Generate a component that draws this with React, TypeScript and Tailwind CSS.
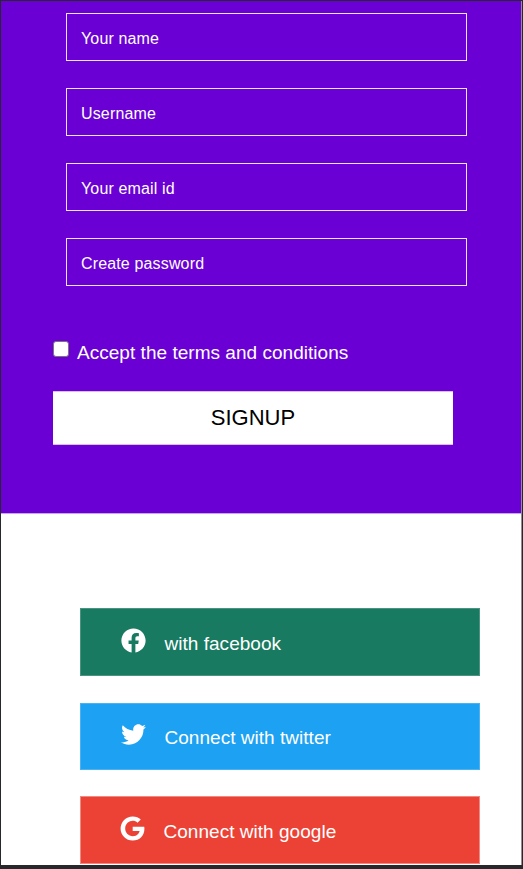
import type { ReactNode } from "react";
import { FaFacebook, FaTwitter, FaGoogle } from "react-icons/fa";

const fields = [
  { label: "Your name", type: "text" },
  { label: "Username", type: "text" },
  { label: "Your email id", type: "email" },
  { label: "Create password", type: "password" },
];

function Social({ icon, label, className }: { icon: ReactNode; label: string; className: string }) {
  return (
    <button type="button" className={`flex w-[400px] items-center border text-left text-[19px] leading-6 tracking-[0.03px] text-white ${className}`}>
      {icon}
      <span>{label}</span>
    </button>
  );
}

export default function App() {
  return (
    <div className="h-[869px] w-[523px] overflow-hidden border-t border-r border-b-4 border-l border-[#26282b] bg-white font-['Liberation_Sans',Arial,sans-serif]">
      <div className="flex h-full flex-col border-r border-[#909090]">
        <form className="h-[513px] shrink-0 border-b border-[#c8a5ef] bg-[#6a00d4] pt-3 pl-[52px]">
          <div className="flex flex-col gap-[27px] pl-[13px]">
            {fields.map((f) => (
              <input
                key={f.label}
                type={f.type}
                placeholder={f.label}
                className="h-12 w-[401px] border border-[#f0e5fb] bg-transparent px-3.5 pt-1 text-base tracking-[0.15px] text-white outline-none placeholder:text-white placeholder:opacity-100"
              />
            ))}
          </div>
          <label className="mt-[55px] flex h-6 items-start text-[19px] leading-6 tracking-[0.03px] text-white">
            <input type="checkbox" className="mr-2 h-4 w-4 appearance-none rounded-[3px] border border-[#767676] bg-white" />
            <span>Accept the terms and conditions</span>
          </label>
          <button type="button" className="mt-[26px] block h-[54px] w-[400px] border-y border-[#d9bdf5] bg-white pb-0.5 text-[22px] text-black">
            SIGNUP
          </button>
        </form>
        <div className="flex shrink-0 flex-col pt-[94px] pl-[79px]">
          <Social
            className="mb-[27px] h-[68px] border-[#489480] bg-[#187a61] pt-1 pl-10"
            icon={<FaFacebook className="mr-[18.5px] mb-[7px] h-[25px] w-[25px]" />}
            label="with facebook"
          />
          <Social
            className="mb-[26px] h-[67px] border-[#48b2f5] bg-[#1da1f2] pt-0.5 pl-10"
            icon={<FaTwitter className="mr-[18.5px] mb-1.5 h-[25px] w-[25px]" />}
            label="Connect with twitter"
          />
          <Social
            className="h-[68px] border-[#f28980] bg-[#ec4235] pt-1 pl-[39px]"
            icon={<FaGoogle className="mr-[18.5px] mb-2 h-[25px] w-[25px]" />}
            label="Connect with google"
          />
        </div>
      </div>
    </div>
  );
}
